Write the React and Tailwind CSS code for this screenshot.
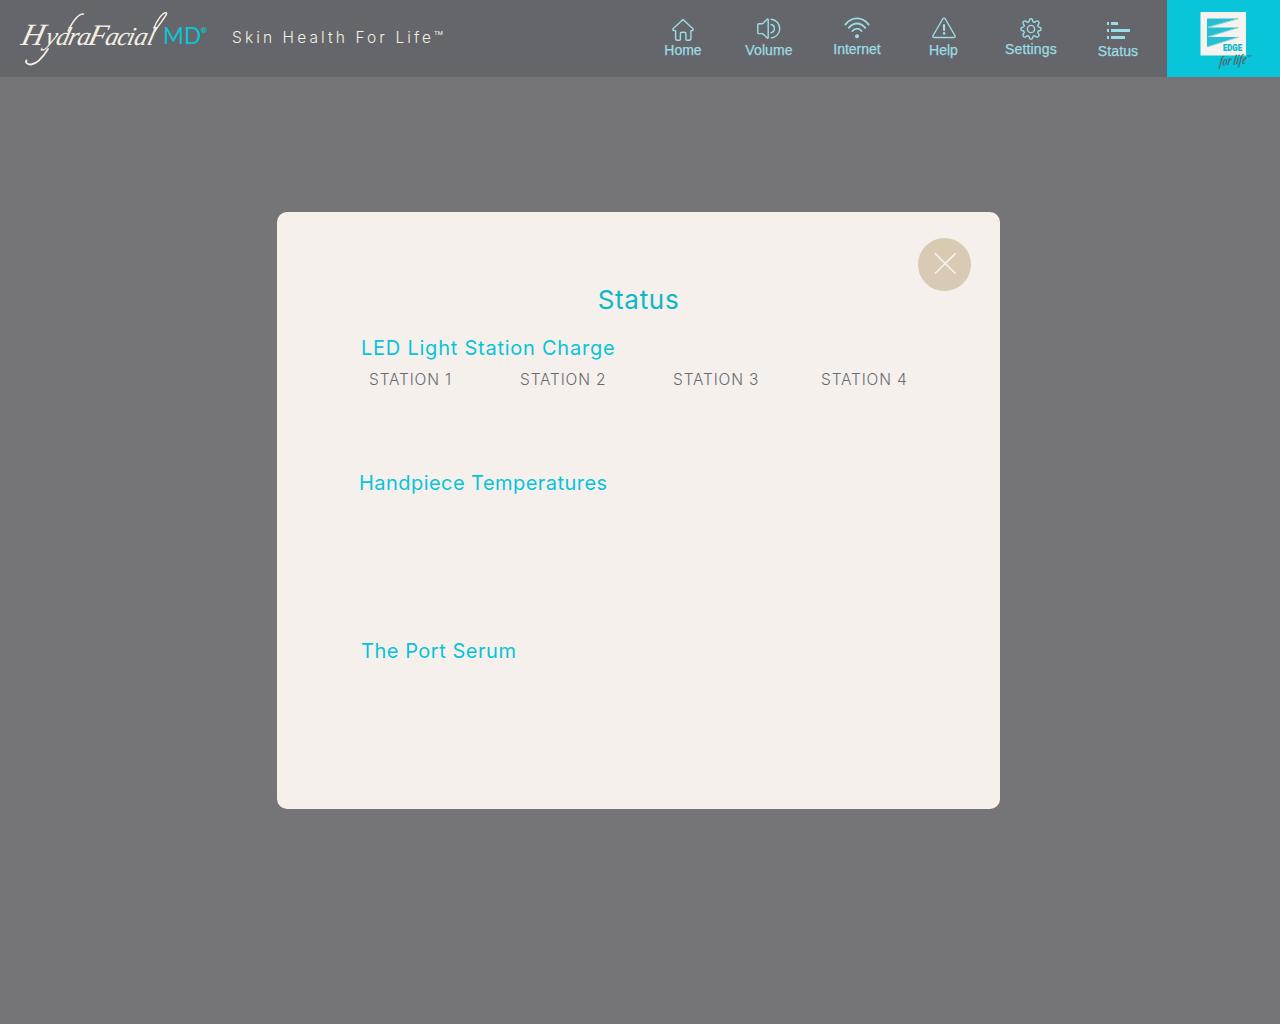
function Icon({ w, h, children, className = "" }) {
  return (
    <svg
      width={w}
      height={h}
      viewBox={`0 0 ${w} ${h}`}
      fill="none"
      stroke="currentColor"
      strokeWidth="1.4"
      strokeLinecap="round"
      strokeLinejoin="round"
      className={`block shrink-0 ${className}`}
    >
      {children}
    </svg>
  );
}

const HomeIcon = () => (
  <Icon w={24} h={24} className="mt-[18px]">
    <path d="M12 1.5 L22.2 11 Q22.6 13 19.9 12.6 V20.3 Q19.9 22.2 18 22.2 H15.9 Q14.9 22.2 14.9 21.2 V15.6 Q14.9 14.2 13.6 14.2 H10.8 Q9.4 14.2 9.4 15.6 V21.2 Q9.4 22.2 8.4 22.2 H6.3 Q4.6 22.2 4.6 20.3 V12.6 Q1.6 13 1.8 11 Z" />
  </Icon>
);

const VolumeIcon = () => (
  <Icon w={24} h={22} className="mt-[18px]">
    <path d="M1.6 5.8 H5.6 L10.2 1.2 Q11.2 .6 11.2 1.9 V19.3 Q11.2 20.7 10.2 20.1 L5.6 15.6 H1.6 Q0.8 15.6 0.8 14.8 V6.6 Q0.8 5.8 1.6 5.8 Z" />
    <path d="M14.1 6.5 A4.2 4.2 0 0 1 14.1 14.7" />
    <path d="M14.3 1.2 A9.4 9.4 0 0 1 14.3 19.9" />
  </Icon>
);

const WifiIcon = () => (
  <Icon w={26} h={22} className="mt-[17px]">
    <g strokeWidth="1.8">
      <path d="M1.3 7.6 Q6 1.4 13 1.4 T24.7 7.6" />
      <path d="M4.8 10.9 Q8.3 6.5 13 6.5 T21.2 10.9" />
      <path d="M8.4 14 Q10.3 11.7 13 11.7 T17.6 14" />
    </g>
    <circle cx="13" cy="19.2" r="2" fill="currentColor" stroke="none" />
  </Icon>
);

const HelpIcon = () => (
  <Icon w={24} h={22} className="mt-[17px] ml-px">
    <path d="M10.7 2 Q12 .3 13.3 2 L22.9 18.5 Q23.6 20.5 21.6 20.5 H2.4 Q.4 20.5 1.1 18.5 Z" />
    <path d="M12 8.2 L12.1 13" strokeWidth="2.2" />
    <circle cx="12.1" cy="16.4" r="1.3" fill="currentColor" stroke="none" />
  </Icon>
);

const SettingsIcon = () => (
  <Icon w={22} h={22} className="mt-[18px]">
    <path d="M9.3 2.6 Q9.5 .8 11 .8 T12.7 2.6 Q13 4.5 14.7 4.2 L16 3.3 Q17.4 2.4 18.5 3.5 T18.7 6 L17.8 7.3 Q17.3 9 19.4 9.3 Q21.2 9.5 21.2 11 T19.4 12.7 Q17.3 13 17.8 14.7 L18.7 16 Q19.6 17.4 18.5 18.5 T16 18.7 L14.7 17.8 Q13 17.3 12.7 19.4 Q12.5 21.2 11 21.2 T9.3 19.4 Q9 17.3 7.3 17.8 L6 18.7 Q4.6 19.6 3.5 18.5 T3.3 16 L4.2 14.7 Q4.7 13 2.6 12.7 Q.8 12.5 .8 11 T2.6 9.3 Q4.7 9 4.2 7.3 L3.3 6 Q2.4 4.6 3.5 3.5 T6 3.3 L7.3 4.2 Q9 4.5 9.3 2.6 Z" />
    <circle cx="11" cy="11" r="3.6" />
  </Icon>
);

const StatusIcon = () => (
  <Icon w={24} h={18} className="mt-[21px]">
    <g fill="currentColor" stroke="none">
      <path d="M1 1h2v3H1zM5 1h7v3H5zM1 8h2v3H1zM5 8h19v3H5zM1 15h2v3H1zM5 15h14v3H5z" />
    </g>
  </Icon>
);

const nav = [
  { label: "Home", Glyph: HomeIcon, box: "w-[86px]", text: "mt-0" },
  { label: "Volume", Glyph: VolumeIcon, box: "w-[86px]", text: "mt-[2px] tracking-[0.1px]" },
  { label: "Internet", Glyph: WifiIcon, box: "w-[90px]", text: "mt-[2px]" },
  { label: "Help", Glyph: HelpIcon, box: "w-[83px]", text: "mt-[3px]" },
  { label: "Settings", Glyph: SettingsIcon, box: "w-[92px]", text: "mt-[1px] tracking-[0.15px]" },
  { label: "Status", Glyph: StatusIcon, box: "w-[82px]", text: "mt-[4px] tracking-[0.1px]" },
];

function Brand() {
  return (
    <svg width="212" height="77" viewBox="0 0 212 77" className="block shrink-0" aria-label="HydraFacial MD">
      <g transform="translate(0 45) skewX(-14)">
        <text y="0" fill="#f3f0e2" fontFamily="Liberation Serif, serif" fontStyle="italic" fontSize="26">
          <tspan x="20" fontSize="31">H</tspan>
          <tspan x="44 55 67 76">ydra</tspan>
          <tspan x="87" fontSize="30">F</tspan>
          <tspan x="104 116 126 133 146">acial</tspan>
        </text>
      </g>
      <g fill="none" stroke="#f3f0e2" strokeWidth="1.5" strokeLinecap="round">
        <path d="M48 49 C43 57 37 64 31 64.500 C27 64.500 25 62 26.500 60.500" strokeWidth="1.8" />
        <path d="M68 31 C73 21 78 13.500 83.500 14" />
        <path d="M155 31 C160 23 169 13 166 12.700 C163 12 157 20 154 28" />
      </g>
      <g fill="#0cc5d6" fontFamily="Lato, sans-serif">
        <text x="163" y="44" fontSize="22.500" textLength="38" lengthAdjust="spacingAndGlyphs">MD</text>
        <text x="200.500" y="33" fontSize="8" fontWeight="700">®</text>
      </g>
    </svg>
  );
}

function EdgeLogo() {
  return (
    <svg width="113" height="77" viewBox="0 0 113 77" className="block">
      <path d="M33.500 12 H79 V55.500 H33.500 Z" fill="#f6f3ee" />
      <path d="M40 18.500 H72 L41 27.500 H72 L41 37 H72 L40 47 Z" fill="#27bed3" />
      <path d="M72 18.500 L41 27.200 M72 27.500 L41 36.800 M72 37 L40 47" stroke="#8ed9e0" strokeWidth="1" />
      <text x="56" y="51" fontFamily="Roboto, sans-serif" fontWeight="900" fontSize="8.500" textLength="19" lengthAdjust="spacingAndGlyphs" fill="#16b9cb" stroke="#16b9cb" strokeWidth="0.200">EDGE</text>
      <g transform="translate(52 66) rotate(-5) skewX(-14)" fill="#4c6870" fontFamily="Liberation Serif, serif" fontStyle="italic" fontWeight="700">
        <text x="0" y="0" fontSize="14" textLength="27" lengthAdjust="spacingAndGlyphs">for life</text>
        <text x="26" y="-5" fontSize="5">™</text>
      </g>
    </svg>
  );
}

function Heading({ children, className }) {
  return (
    <h2 className={`whitespace-nowrap text-[20px] leading-[24px] font-normal text-[#08c4d8] ${className}`}>{children}</h2>
  );
}

const stations = [
  { name: "STATION 1", box: "w-[151px]" },
  { name: "STATION 2", box: "w-[153px]" },
  { name: "STATION 3", box: "w-[148px]" },
  { name: "STATION 4", box: "w-[100px]" },
];

export default function App() {
  return (
    <div className="flex h-[1024px] w-[1280px] flex-col overflow-hidden bg-[#757577] font-['Inter',sans-serif]">
      <header className="flex h-[77px] shrink-0 bg-[#65666b]">
        <Brand />
        <p className="mt-[25px] ml-5 w-[408px] whitespace-nowrap text-[15.5px] leading-[25px] font-light tracking-[3.1px] text-[#f3f0e2]">
          Skin Health For Life™
        </p>
        <nav className="flex w-[527px] text-[#9bdde6]">
          {nav.map(({ label, Glyph, box, text }) => (
            <button key={label} type="button" className={`flex flex-col items-center ${box}`}>
              <Glyph />
              <span
                className={`font-['Liberation_Sans',sans-serif] text-[14px] leading-4 [-webkit-text-stroke:0.25px_currentColor] ${text}`}
              >
                {label}
              </span>
            </button>
          ))}
        </nav>
        <div className="h-full w-[113px] bg-[#09c5da]">
          <EdgeLogo />
        </div>
      </header>

      <main className="mt-[135px] ml-[277px] flex h-[597px] w-[723px] flex-col rounded-[10px] bg-[#f5f0ec]">
        <div className="flex h-[79px] shrink-0 justify-end pt-[26px] pr-[29px]">
          <button type="button" aria-label="Close" className="flex h-[52.5px] w-[53px] items-center justify-center rounded-full bg-[#d9cab3]">
            <svg width="22" height="22" viewBox="0 0 22 22" stroke="#f5f0ec" strokeWidth="1.7" strokeLinecap="round">
              <path d="M1.500 .8 L21 20 M21 .8 L1.500 20" />
            </svg>
          </button>
        </div>
        <h1 className="mt-[-7px] h-[32px] text-center text-[26px] leading-[32px] font-normal tracking-[0.7px] text-[#0cb7c8]">Status</h1>
        <section className="mt-[20px] h-[135px] pl-[84px]">
          <Heading className="tracking-[0.76px]">LED Light Station Charge</Heading>
          <div className="mt-[8px] flex pl-[8px] text-[15.5px] leading-[24px] font-light tracking-[0.85px] text-[#6a6b70]">
            {stations.map((s) => (
              <span key={s.name} className={`whitespace-nowrap ${s.box}`}>{s.name}</span>
            ))}
          </div>
        </section>
        <section className="h-[168px] pl-[82px]">
          <Heading className="tracking-[0.45px]">Handpiece Temperatures</Heading>
        </section>
        <section className="pl-[84px]">
          <Heading className="tracking-[0.53px]">The Port Serum</Heading>
        </section>
      </main>
    </div>
  );
}
